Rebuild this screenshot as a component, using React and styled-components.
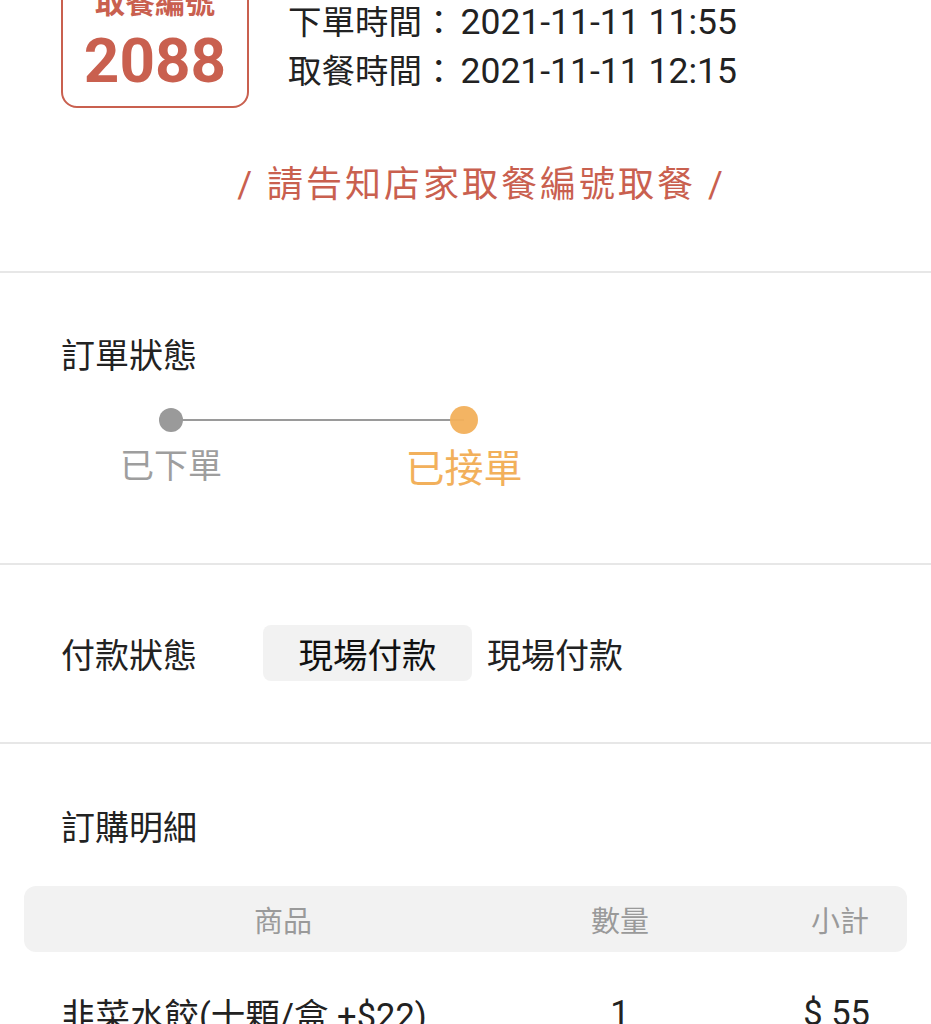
import React from 'react';
import styled, { createGlobalStyle } from 'styled-components';

const GlobalStyle = createGlobalStyle`
  html, body {
    margin: 0;
    padding: 0;
    background: #fff;
    overflow: hidden;
  }
  body {
    font-family: Roboto, "Noto Sans CJK TC", "Noto Sans", sans-serif;
    color: #222;
  }
`;

const RED = '#c9604f';
const ORANGE = '#f2b05b';

const Root = styled.div`
  width: 931px;
`;

const TopSection = styled.div`
  padding: 0 0 64px;
`;

const TicketRow = styled.div`
  display: flex;
  align-items: flex-start;
  margin-top: -29px;
  padding-left: 61px;
`;

const NumberBox = styled.div`
  width: 188px;
  box-sizing: border-box;
  border: 2px solid ${RED};
  border-radius: 16px;
  padding: 12px 0 14px;
  text-align: center;
  color: ${RED};
  font-weight: bold;
`;

const BoxLabel = styled.div`
  font-size: 30px;
  line-height: 36px;
  margin-bottom: 9px;
`;

const BoxNumber = styled.div`
  font-size: 62px;
  line-height: 62px;
`;

const Times = styled.div`
  margin: 27px 0 0 39px;
  font-size: 33.5px;
  line-height: 48px;
  color: #222;
  white-space: nowrap;
`;

const Digits = styled.span`
  margin-left: 5px;
  font-size: 35.5px;
`;

const Notice = styled.div`
  margin-top: 55px;
  padding-left: 32px;
  text-align: center;
  font-size: 36px;
  letter-spacing: 3px;
  line-height: 44px;
  color: ${RED};
`;

const Divider = styled.div`
  height: 2px;
  background: #e7e7e7;
`;

const Section = styled.div`
  padding: ${(p) => p.$pad};
`;

const Title = styled.div`
  padding-left: 61px;
  font-size: 34px;
  line-height: 40px;
  color: #222;
`;

const Stepper = styled.div`
  position: relative;
  display: grid;
  grid-template-columns: 160px 160px;
  column-gap: 133px;
  margin: 30px 0 0 91px;
  width: 453px;
`;

const Track = styled.div`
  position: absolute;
  left: 80px;
  top: 13px;
  width: 293px;
  height: 2px;
  background: #9a9a9a;
`;

const DotCell = styled.div`
  height: 28px;
  display: flex;
  align-items: center;
  justify-content: center;
`;

const Dot = styled.span`
  position: relative;
  width: ${(p) => p.$size}px;
  height: ${(p) => p.$size}px;
  border-radius: 50%;
  background: ${(p) => p.$color};
  opacity: ${(p) => (p.$active ? 0.95 : 1)};
`;

const StepLabel = styled.div`
  margin-top: 12px;
  text-align: center;
  font-size: ${(p) => (p.$active ? 39 : 34)}px;
  line-height: ${(p) => (p.$active ? 46 : 40)}px;
  color: ${(p) => (p.$active ? ORANGE : '#9e9e9e')};
`;

const PayRow = styled.div`
  display: flex;
  align-items: center;
  padding-left: 61px;
  font-size: 34px;
`;

const PayLabel = styled.div`
  width: 202px;
`;

const Chip = styled.div`
  width: 209px;
  height: 56px;
  border-radius: 8px;
  background: #f2f2f2;
  display: flex;
  align-items: center;
  justify-content: center;
  font-size: 34.5px;
  color: #111;
`;

const PayText = styled.div`
  margin-left: 15px;
`;

const TableHead = styled.div`
  display: grid;
  grid-template-columns: 518px 156px 1fr;
  align-items: center;
  height: 66px;
  margin: 38px 24px 0;
  border-radius: 12px;
  background: #f2f2f2;
  font-size: 29px;
  color: #9a9a9a;
`;

const TableRow = styled.div`
  display: grid;
  grid-template-columns: 518px 156px 1fr;
  align-items: center;
  height: 44px;
  margin: 36px 24px 0;
  font-size: 34.5px;
  color: #222;
`;

const Cell = styled.div`
  text-align: ${(p) => p.$align || 'center'};
  padding: ${(p) => p.$pad || '0'};
  white-space: nowrap;
`;

export default function App() {
  return (
    <Root>
      <GlobalStyle />
      <TopSection>
        <TicketRow>
          <NumberBox>
            <BoxLabel>取餐編號</BoxLabel>
            <BoxNumber>2088</BoxNumber>
          </NumberBox>
          <Times>
            <div>下單時間：<Digits>2021-11-11 11:55</Digits></div>
            <div>取餐時間：<Digits>2021-11-11 12:15</Digits></div>
          </Times>
        </TicketRow>
        <Notice>/ 請告知店家取餐編號取餐 /</Notice>
      </TopSection>
      <Divider />

      <Section $pad="63px 0 71px">
        <Title>訂單狀態</Title>
        <Stepper>
          <Track />
          <DotCell>
            <Dot $size={24} $color="#9a9a9a" />
          </DotCell>
          <DotCell>
            <Dot $size={28} $color={ORANGE} $active />
          </DotCell>
          <StepLabel>已下單</StepLabel>
          <StepLabel $active>已接單</StepLabel>
        </Stepper>
      </Section>
      <Divider />

      <Section $pad="60px 0 61px">
        <PayRow>
          <PayLabel>付款狀態</PayLabel>
          <Chip>現場付款</Chip>
          <PayText>現場付款</PayText>
        </PayRow>
      </Section>
      <Divider />

      <Section $pad="64px 0 40px">
        <Title>訂購明細</Title>
        <TableHead>
          <Cell>商品</Cell>
          <Cell>數量</Cell>
          <Cell $align="right" $pad="0 38px 0 0">小計</Cell>
        </TableHead>
        <TableRow>
          <Cell $align="left" $pad="0 0 0 37px">韭菜水餃(十顆/盒 +$22)</Cell>
          <Cell>1</Cell>
          <Cell $align="right" $pad="0 37px 0 0">$ 55</Cell>
        </TableRow>
      </Section>
    </Root>
  );
}
